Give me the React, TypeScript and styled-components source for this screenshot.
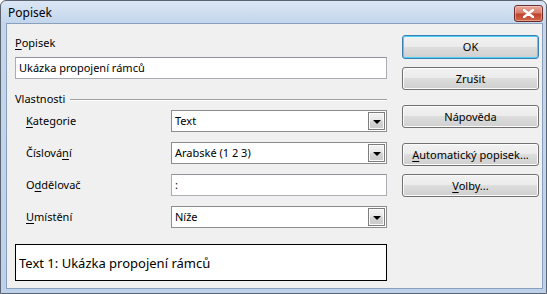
import styled, { createGlobalStyle } from 'styled-components'

const Global = createGlobalStyle`
  html, body {
    margin: 0;
    padding: 0;
    background: #ffffff;
  }
  body {
    font-family: 'Noto Sans', 'Open Sans', sans-serif;
    font-size: 11px;
    color: #000000;
  }
`

const Window = styled.div`
  width: 547px;
  height: 294px;
  box-sizing: border-box;
  display: flex;
  flex-direction: column;
  border: 1px solid #5b6470;
  border-radius: 6px 6px 0 0;
  background: linear-gradient(#dbe6f4 0px, #c3d6ec 22px, #bdd2ea 100%);
  padding: 0 3px 4px 5px;
  overflow: hidden;
`

const TitleBar = styled.div`
  height: 22px;
  display: flex;
  align-items: center;
  justify-content: space-between;
  padding-left: 2px;
`

const Title = styled.span`
  font-size: 12px;
  color: #000000;
  line-height: 16px;
  margin-top: 2px;
`

const CloseButton = styled.div`
  width: 27px;
  height: 15px;
  margin-top: 3px;
  border: 1px solid #6d2d2a;
  border-radius: 3px;
  background: linear-gradient(#e9a99c 0%, #d77e6c 45%, #c2422c 55%, #d0674b 100%);
  display: flex;
  align-items: center;
  justify-content: center;
  box-shadow: inset 0 0 0 1px rgba(255, 255, 255, 0.35);
`

const Client = styled.div`
  flex: 1;
  display: flex;
  gap: 15px;
  background: #f0f0f0;
  border: 1px solid #8a9fbb;
  padding: 11px 3px 0 8px;
`

const LeftCol = styled.div`
  width: 372px;
  display: flex;
  flex-direction: column;
`

const RightCol = styled.div`
  width: 137px;
  display: flex;
  flex-direction: column;
`

const Label = styled.div`
  line-height: 16px;
  height: 16px;
  white-space: nowrap;
`

const U = styled.span`
  text-decoration: underline;
  text-underline-offset: 2px;
`

const TextField = styled.div<{ $width?: number; $top?: number }>`
  box-sizing: border-box;
  width: ${(p) => (p.$width ? `${p.$width}px` : '100%')};
  height: 22px;
  margin-top: ${(p) => p.$top ?? 0}px;
  background: #ffffff;
  border: 1px solid #abadb3;
  border-top-color: #8f9298;
  display: flex;
  align-items: center;
  padding-left: 3px;
  line-height: 16px;
`

const GroupHeader = styled.div`
  display: flex;
  align-items: center;
  gap: 5px;
  margin-top: 12px;
`

const GroupLine = styled.div`
  flex: 1;
  height: 0;
  border-top: 1px solid #a0a0a0;
  border-bottom: 1px solid #ffffff;
  margin-top: 1px;
`

const Rows = styled.div`
  display: flex;
  flex-direction: column;
  gap: 10px;
  margin-top: 3px;
`

const Row = styled.div`
  display: flex;
  align-items: center;
`

const RowLabel = styled.div`
  width: 145px;
  padding-left: 11px;
  line-height: 16px;
  white-space: nowrap;
`

const Combo = styled.div`
  box-sizing: border-box;
  width: 216px;
  height: 22px;
  background: #ffffff;
  border: 1px solid #8d8d8d;
  display: flex;
  align-items: center;
  justify-content: space-between;
  padding: 1px 1px 1px 3px;
`

const ComboText = styled.span`
  line-height: 16px;
`

const DropButton = styled.div`
  box-sizing: border-box;
  width: 17px;
  height: 18px;
  border: 1px solid #7d7d7d;
  background: linear-gradient(#f3f3f3 0%, #e6e6e6 50%, #d4d4d4 51%, #c9c9c9 100%);
  box-shadow: inset 0 0 0 1px #fafafa;
  display: flex;
  align-items: center;
  justify-content: center;
`

const Arrow = styled.div`
  width: 0;
  height: 0;
  border-left: 4px solid transparent;
  border-right: 4px solid transparent;
  border-top: 4px solid #000000;
  margin-top: 1px;
`

const Preview = styled.div`
  box-sizing: border-box;
  width: 372px;
  height: 37px;
  margin-top: 16px;
  background: #ffffff;
  border: 1px solid #000000;
  display: flex;
  align-items: center;
  padding-left: 3px;
  font-size: 13px;
  line-height: 18px;
`

const Button = styled.div<{ $top: number; $default?: boolean }>`
  box-sizing: border-box;
  height: ${(p) => (p.$default ? 24 : 23)}px;
  margin-top: ${(p) => p.$top}px;
  border: 1px solid ${(p) => (p.$default ? '#3c7fb1' : '#707070')};
  border-radius: 3px;
  background: linear-gradient(#f2f2f2 0%, #ebebeb 49%, #dddddd 50%, #cfcfcf 100%);
  box-shadow: inset 0 0 0 1px ${(p) => (p.$default ? '#48d0f8' : '#fcfcfc')};
  display: flex;
  align-items: center;
  justify-content: center;
  line-height: 16px;
  white-space: nowrap;
`

export default function App() {
  return (
    <>
      <Global />
      <Window>
        <TitleBar>
          <Title>Popisek</Title>
          <CloseButton>
            <svg width="11" height="9" viewBox="0 0 11 9">
              <path
                d="M1 1 L10 8 M10 1 L1 8"
                stroke="#ffffff"
                strokeWidth="2.4"
                strokeLinecap="round"
              />
            </svg>
          </CloseButton>
        </TitleBar>
        <Client>
          <LeftCol>
            <Label>
              <U>P</U>opisek
            </Label>
            <TextField $top={6}>Ukázka propojení rámců</TextField>
            <GroupHeader>
              <Label>Vlastnosti</Label>
              <GroupLine />
            </GroupHeader>
            <Rows>
              <Row>
                <RowLabel>
                  <U>K</U>ategorie
                </RowLabel>
                <Combo>
                  <ComboText>Text</ComboText>
                  <DropButton>
                    <Arrow />
                  </DropButton>
                </Combo>
              </Row>
              <Row>
                <RowLabel>
                  Číslová<U>n</U>í
                </RowLabel>
                <Combo>
                  <ComboText>Arabské (1 2 3)</ComboText>
                  <DropButton>
                    <Arrow />
                  </DropButton>
                </Combo>
              </Row>
              <Row>
                <RowLabel>
                  O<U>d</U>dělovač
                </RowLabel>
                <TextField $width={216}>:</TextField>
              </Row>
              <Row>
                <RowLabel>
                  <U>U</U>místění
                </RowLabel>
                <Combo>
                  <ComboText>Níže</ComboText>
                  <DropButton>
                    <Arrow />
                  </DropButton>
                </Combo>
              </Row>
            </Rows>
            <Preview>Text 1: Ukázka propojení rámců</Preview>
          </LeftCol>
          <RightCol>
            <Button $top={0} $default>
              OK
            </Button>
            <Button $top={8}>Zrušit</Button>
            <Button $top={15}>Nápověda</Button>
            <Button $top={15}>
              <span>
                <U>A</U>utomatický popisek...
              </span>
            </Button>
            <Button $top={8}>
              <span>
                <U>V</U>olby...
              </span>
            </Button>
          </RightCol>
        </Client>
      </Window>
    </>
  )
}
